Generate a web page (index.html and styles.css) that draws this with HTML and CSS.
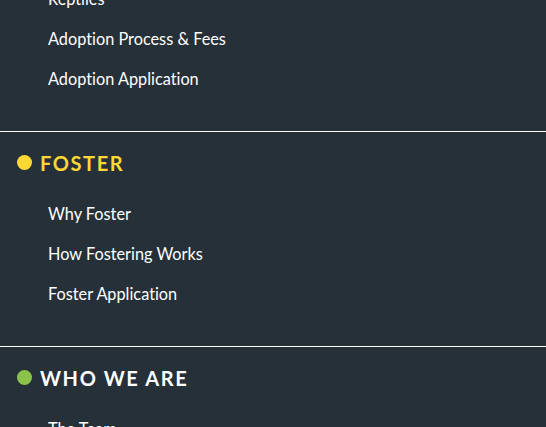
FILE: index.html
```html
<!DOCTYPE html>
<html>
<head>
<meta charset="utf-8">
<link rel="stylesheet" href="styles.css">
</head>
<body>
<nav class="menu">
  <section class="group group-first">
    <ul class="links">
      <li><a href="#">Reptiles</a></li>
      <li><a href="#">Adoption Process &amp; Fees</a></li>
      <li><a href="#">Adoption Application</a></li>
    </ul>
  </section>
  <section class="group">
    <h2 class="heading heading-yellow"><span class="dot dot-yellow"></span>FOSTER</h2>
    <ul class="links">
      <li><a href="#">Why Foster</a></li>
      <li><a href="#">How Fostering Works</a></li>
      <li><a href="#">Foster Application</a></li>
    </ul>
  </section>
  <section class="group">
    <h2 class="heading"><span class="dot dot-green"></span>WHO WE ARE</h2>
    <ul class="links">
      <li><a href="#">The Team</a></li>
    </ul>
  </section>
</nav>
</body>
</html>
```
FILE: styles.css
```css
html, body {
  margin: 0;
  padding: 0;
  background: #263038;
  height: 100%;
  overflow: hidden;
}
.menu {
  font-family: "Lato", "Open Sans", sans-serif;
  font-variant-ligatures: none;
  color: #ffffff;
  margin-top: -22px;
}
.group {
  border-top: 1px solid #ffffff;
}
.group-first {
  border-top: none;
}
.heading {
  margin: 0;
  height: 61px;
  display: flex;
  align-items: center;
  gap: 8px;
  padding: 0 17px;
  font-size: 20px;
  font-weight: 700;
  letter-spacing: 1.6px;
  color: #ffffff;
}
.heading-yellow {
  color: #fdd835;
}
.dot {
  width: 15px;
  height: 15px;
  border-radius: 50%;
  flex: none;
}
.dot-yellow { background: #fdd835; }
.dot-green { background: #8bc34a; }
.links {
  list-style: none;
  margin: 0;
  padding: 0 0 33px 48px;
}
.links li {
  height: 40px;
  display: flex;
  align-items: center;
}
.links a {
  color: #ffffff;
  text-decoration: none;
  font-size: 16.3px;
}
```
